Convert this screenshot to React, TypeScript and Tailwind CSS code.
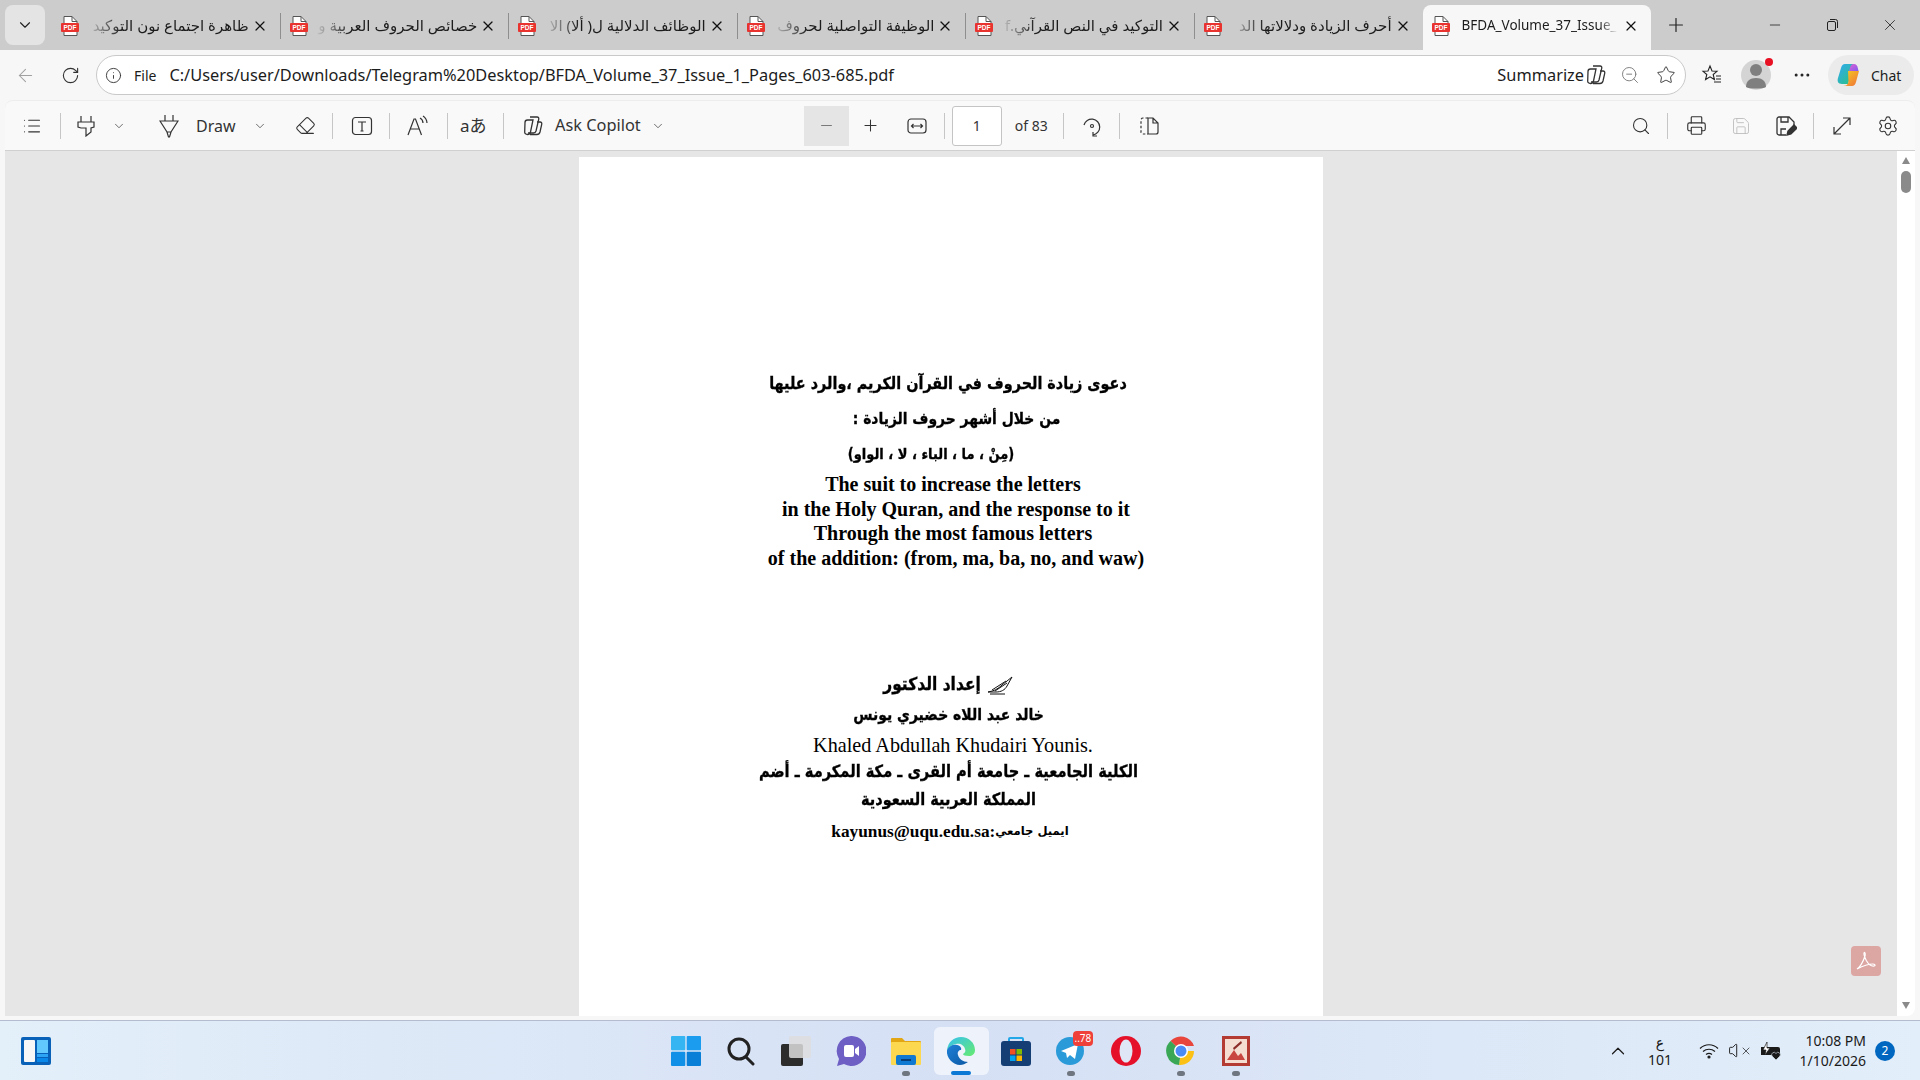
import React from 'react';
import {
  ArrowLeft,
  ChevronDown,
  ChevronUp,
  Ellipsis,
  Eraser,
  Info,
  List,
  Minus,
  Plus,
  Printer,
  RotateCw,
  Save,
  Search,
  Settings,
  Star,
  Volume,
  X,
  ZoomOut,
} from 'lucide-react';

const tabs = [
  { title: 'ظاهرة اجتماع نون التوكيد' },
  { title: 'خصائص الحروف العربية و' },
  { title: 'الوظائف الدلالية ل( ألا) الا' },
  { title: 'الوظيفة التواصلية لحروف' },
  { title: 'التوكيد في النص القرآني.f' },
  { title: 'أحرف الزيادة ودلالاتها الد' },
];

function PdfIcon() {
  return (
    <svg width="20" height="20" viewBox="0 0 20 20" className="shrink-0">
      <path d="M4 .5h8l5 5v14H4z" fill="#fff" stroke="#555" strokeWidth="1" />
      <path d="M12 .5v5h5" fill="none" stroke="#555" strokeWidth="1" />
      <rect x="1" y="7" width="18" height="9" rx="1" fill="#e8332f" />
      <text x="10" y="14" textAnchor="middle" fontSize="6.500" fontWeight="700" fill="#fff" fontFamily="Liberation Sans, sans-serif">PDF</text>
    </svg>
  );
}

function Sep() {
  return <div className="h-[26px] w-px shrink-0 bg-[#c6c6c6]" />;
}

function CopilotMono({ size = 22 }: { size?: number }) {
  return (
    <svg width={size} height={size} viewBox="0 0 24 24" fill="none" stroke="#333" strokeWidth="1.3" className="shrink-0">
      <path d="M9 3h7c1.5 0 2 1 1.7 2.3L15 17c-.4 1.5-1.2 2-2.5 2H7" />
      <path d="M4 8.5C4 7 5 6 6.5 6H12L9.5 18c-.3 1.4-1.5 2.5-3 2.5S3.500 19.500 3.700 18z" />
      <path d="M16 8h3c1.500 0 2 1 1.700 2.300L19 18c-.4 1.500-1.500 2.500-3 2.500H9" />
    </svg>
  );
}

function CopilotColor() {
  return (
    <svg width="28" height="28" viewBox="0 0 28 28" className="shrink-0">
      <defs>
        <linearGradient id="cpa" x1="0" y1="0" x2="1" y2="1">
          <stop offset="0" stopColor="#2fa8f5" />
          <stop offset="1" stopColor="#2cc47a" />
        </linearGradient>
        <linearGradient id="cpb" x1="0" y1="0" x2="1" y2="1">
          <stop offset="0" stopColor="#e85fd0" />
          <stop offset="1" stopColor="#7a5cf0" />
        </linearGradient>
        <linearGradient id="cpc" x1="0" y1="0" x2="1" y2="1">
          <stop offset="0" stopColor="#f5d020" />
          <stop offset="1" stopColor="#f0703a" />
        </linearGradient>
      </defs>
      <path d="M10 3h9l-6 20H7c-4 0-5-3-4-6l3-10c.7-2.500 2-4 4-4z" fill="url(#cpa)" />
      <path d="M13 10h11l-3 11c-.7 2.500-2 4-4 4H8c3 0 4.500-1 5.500-4z" fill="url(#cpc)" />
      <path d="M19 3c2 0 3.200 1.500 3.800 4l.7 3H14l1.500-4.500C16.200 3.800 17.500 3 19 3z" fill="url(#cpb)" />
    </svg>
  );
}

function TabStrip() {
  return (
    <div className="flex h-[50px] shrink-0 items-end bg-[#cccccc]">
      <div className="mb-[5px] ml-[5px] flex h-[40px] w-[40px] shrink-0 items-center justify-center rounded-lg bg-[#e4e4e4]">
        <ChevronDown size={18} strokeWidth={1.5} className="text-[#222]" />
      </div>
      <div className="ml-[7px] flex h-[45px]">
        {tabs.map((tab, i) => (
          <div key={i} className="flex h-full w-[228.600px] items-center pb-[4px] pl-[8px]">
            <PdfIcon />
            <div
              dir="rtl"
              className="ml-[6px] w-[163px] overflow-hidden whitespace-nowrap text-[15px] text-[#1c1c1c] [mask-image:linear-gradient(to_left,#000_78%,transparent)]"
            >
              {tab.title}
            </div>
            <X size={16} strokeWidth={1.8} className="ml-[3px] shrink-0 text-[#111]" />
            <div className="ml-[12px] h-[26px] w-px shrink-0 bg-[#8e8e8e]" />
          </div>
        ))}
      </div>
      <div className="-ml-[1px] flex h-[45px] w-[228px] items-center rounded-t-lg bg-[#f7f7f7] pb-[4px] pl-[8px]">
        <PdfIcon />
        <div className="ml-[11px] w-[156px] whitespace-nowrap text-[13.500px] text-[#1c1c1c] [mask-image:linear-gradient(to_right,#000_88%,transparent)]">
          BFDA_Volume_37_Issue_
        </div>
        <X size={16} strokeWidth={1.8} className="ml-[5px] shrink-0 text-[#111]" />
      </div>
      <div className="mb-[5px] ml-[14px] flex h-[40px] items-center">
        <Plus size={22} strokeWidth={1.3} className="text-[#222]" />
      </div>
      <div className="mb-[5px] ml-auto flex h-[40px] items-center pr-[21px] text-[#222]">
        <Minus size={16} strokeWidth={1.2} />
        <svg width="14" height="14" viewBox="0 0 14 14" fill="none" stroke="#222" className="ml-[42px]">
          <rect x="2.500" y="3.500" width="8" height="9" rx="1.500" />
          <path d="M5 1.500h5.500a2 2 0 0 1 2 2V10" />
        </svg>
        <X size={18} strokeWidth={1.1} className="ml-[42px]" />
      </div>
    </div>
  );
}

function AddressRow() {
  return (
    <div className="flex h-[50px] shrink-0 items-center bg-[#f7f7f7] text-[#1c1c1c]">
      <ArrowLeft size={21} strokeWidth={1.2} className="ml-[15px] shrink-0 text-[#a0a0a0]" />
      <RotateCw size={19} strokeWidth={1.4} className="ml-[25px] shrink-0 text-[#333]" />
      <div className="ml-[16px] flex h-[40px] w-[1590px] shrink-0 items-center rounded-full border border-[#c9c9c9] bg-white">
        <Info size={17} strokeWidth={1.3} className="ml-[8px] shrink-0 text-[#333]" />
        <span className="ml-[12px] text-[14px]">File</span>
        <span className="ml-[13px] text-[16.350px]">
          C:/Users/user/Downloads/Telegram%20Desktop/BFDA_Volume_37_Issue_1_Pages_603-685.pdf
        </span>
        <span className="ml-auto text-[16.350px]">Summarize</span>
        <CopilotMono size={24} />
        <ZoomOut size={20} strokeWidth={1.1} className="ml-[12px] shrink-0 text-[#777]" />
        <Star size={20} strokeWidth={1.2} className="ml-[16px] mr-[9px] shrink-0 text-[#444]" />
      </div>
      <svg width="22" height="22" viewBox="0 0 22 22" fill="none" stroke="#222" strokeWidth="1.1" className="ml-[15px] shrink-0">
        <path d="M9 2l2 5 5 .3-3.800 3.200 1.200 5L9 12.800 4.600 15.500l1.200-5L2 7.300 7 7z" />
        <path d="M15 12h5M15 15h5M13 18h7" />
      </svg>
      <div className="relative ml-[18px] flex h-[30px] w-[30px] shrink-0 items-center justify-center rounded-full bg-[#d4d4d4]">
        <svg width="24" height="28" viewBox="0 0 24 28" fill="#7f7f7f">
          <circle cx="12" cy="9" r="6" />
          <path d="M2 26c0-6 4-9 10-9s10 3 10 9c-3 2-17 2-20 0z" />
        </svg>
        <div className="absolute -right-[2px] -top-[2px] h-[8px] w-[8px] rounded-full bg-[#e81123]" />
      </div>
      <Ellipsis size={20} strokeWidth={1.6} className="ml-[21px] shrink-0 text-[#222]" />
      <div className="ml-[16px] flex h-[40px] w-[86px] shrink-0 items-center rounded-full bg-[#ebebeb] pl-[7px]">
        <CopilotColor />
        <span className="ml-[8px] text-[14px]">Chat</span>
      </div>
    </div>
  );
}

function PdfToolbar() {
  return (
    <div className="mx-[5px] flex h-[51px] shrink-0 items-center rounded-t-lg border-b border-[#d0d0d0] border-t border-t-[#ededed] bg-[#f9f9f9] text-[#333]">
      <List size={20} strokeWidth={1.3} className="ml-[17px] shrink-0" />
      <div className="ml-[18px]"><Sep /></div>
      <svg width="20" height="22" viewBox="0 0 20 22" fill="none" stroke="#333" strokeWidth="1.2" className="ml-[15px] shrink-0">
        <path d="M5 1v6M15 1v6M2 7h16v5l-3 1v4l-5 4v-8H5v0l-3-1z" />
      </svg>
      <ChevronDown size={14} strokeWidth={1.2} className="ml-[16px] shrink-0" />
      <svg width="20" height="24" viewBox="0 0 20 24" fill="none" stroke="#333" strokeWidth="1.2" className="ml-[33px] shrink-0">
        <path d="M6 1v6M14 1v6M1 7h18l-7 11-1.500 5h-1L8 18zM8 18h4" />
      </svg>
      <span className="ml-[17px] w-[41px] text-[16px]">Draw</span>
      <ChevronDown size={14} strokeWidth={1.2} className="ml-[16px] shrink-0" />
      <Eraser size={21} strokeWidth={1.2} className="ml-[28px] shrink-0" />
      <div className="ml-[16px]"><Sep /></div>
      <svg width="22" height="22" viewBox="0 0 22 22" fill="none" stroke="#333" strokeWidth="1.2" className="ml-[18px] shrink-0">
        <rect x="1.500" y="2.500" width="19" height="17" rx="3" />
        <path d="M7 7h8M11 7v9M9.500 16h3" />
      </svg>
      <div className="ml-[16px]"><Sep /></div>
      <svg width="24" height="22" viewBox="0 0 24 22" fill="none" stroke="#333" strokeWidth="1.2" className="ml-[16px] shrink-0">
        <path d="M2 20L8 4h1.500l6 16M4.500 14h9" />
        <path d="M14 3a6 6 0 0 1 3 5M17 1a9 9 0 0 1 4 7" />
      </svg>
      <div className="ml-[17px]"><Sep /></div>
      <span className="ml-[12px] w-[27px] whitespace-nowrap text-[17px] [font-family:'Noto_Sans','Noto_Sans_CJK_JP',sans-serif]">aあ</span>
      <div className="ml-[16px]"><Sep /></div>
      <div className="ml-[17px]"><CopilotMono size={24} /></div>
      <span className="ml-[10px] text-[16.350px]">Ask Copilot</span>
      <ChevronDown size={14} strokeWidth={1.2} className="ml-[10px] shrink-0" />
      <div className="ml-[139px] flex h-[40px] w-[45px] shrink-0 items-center justify-center bg-[#e5e5e5]">
        <Minus size={17} strokeWidth={1.4} className="text-[#777]" />
      </div>
      <Plus size={19} strokeWidth={1.3} className="ml-[12px] shrink-0" />
      <svg width="20" height="20" viewBox="0 0 20 20" fill="none" stroke="#333" strokeWidth="1.2" className="ml-[27px] shrink-0">
        <rect x="1" y="3" width="18" height="14" rx="3" />
        <path d="M4.500 10h11M6.500 8l-2 2 2 2M13.500 8l2 2-2 2" />
      </svg>
      <div className="ml-[17px]"><Sep /></div>
      <div className="ml-[7px] flex h-[40px] w-[50px] shrink-0 items-center justify-center rounded-[3px] border border-[#c4c4c4] bg-white text-[14px]">1</div>
      <span className="ml-[13px] w-[34px] whitespace-nowrap text-[14px]">of 83</span>
      <div className="ml-[14px]"><Sep /></div>
      <svg width="22" height="22" viewBox="0 0 22 22" fill="none" stroke="#333" strokeWidth="1.2" className="ml-[17px] shrink-0">
        <path d="M3 10a8 8 0 1 1 9 10M12 17v4h4" />
        <circle cx="11" cy="11" r="1.500" />
      </svg>
      <div className="ml-[16px]"><Sep /></div>
      <svg width="22" height="22" viewBox="0 0 22 22" fill="none" stroke="#333" strokeWidth="1.2" className="ml-[18px] shrink-0">
        <path d="M10 3H5a2 2 0 0 0-2 2v12a2 2 0 0 0 2 2h5" strokeDasharray="2.500 2" />
        <path d="M10 3h5l5 5v9a2 2 0 0 1-2 2h-8zM15 3v5h5" />
      </svg>

      <Search size={20} strokeWidth={1.3} className="ml-auto shrink-0" />
      <div className="ml-[16px]"><Sep /></div>
      <Printer size={21} strokeWidth={1.3} className="ml-[18px] shrink-0" />
      <Save size={20} strokeWidth={1.1} className="ml-[24px] shrink-0 text-[#bdbdbd]" />
      <svg width="22" height="22" viewBox="0 0 22 22" fill="none" stroke="#333" strokeWidth="1.3" className="ml-[24px] shrink-0">
        <path d="M11 20H4a2 2 0 0 1-2-2V4a2 2 0 0 1 2-2h10l5 5v3" />
        <path d="M6 2v5h7V2M6 20v-6h5" />
        <path d="M12 20l1-4 6-6 3 3-6 6z" fill="#333" />
      </svg>
      <div className="ml-[16px]"><Sep /></div>
      <svg width="20" height="20" viewBox="0 0 20 20" fill="none" stroke="#333" strokeWidth="1.2" className="ml-[18px] shrink-0">
        <path d="M2 18L18 2M11 2h7v7M2 11v7h7" />
      </svg>
      <Settings size={22} strokeWidth={1.2} className="ml-[25px] mr-[16px] shrink-0" />
    </div>
  );
}

function PenGlyph() {
  return (
    <svg width="28" height="20" viewBox="0 0 28 20" fill="none" stroke="#111" strokeWidth="1" className="shrink-0">
      <path d="M1 17c6-1 10-3 14-7l10-8-5 9c-2 4-6 6-11 6z" />
      <path d="M5 15l14-9M8 16l12-8M3 19h15" />
    </svg>
  );
}

const arabicBold = "font-bold text-black whitespace-nowrap scale-y-[1.15] [-webkit-text-stroke:0.3px_#000] [font-family:'DejaVu_Sans',sans-serif]";
const latinBold = "font-bold text-black whitespace-nowrap text-[20px] leading-[24.500px] [font-family:'Liberation_Serif',serif]";

function PdfPage() {
  return (
    <div className="flex w-[744px] shrink-0 flex-col items-center bg-white pt-[209px]">
      <p dir="rtl" className={`${arabicBold} -ml-[6px] text-[14.400px] leading-[35px]`}>دعوى زيادة الحروف في القرآن الكريم ،والرد عليها</p>
      <p dir="rtl" className={`${arabicBold} ml-[11px] text-[13.900px] leading-[35px]`}>من خلال أشهر حروف الزيادة :</p>
      <p dir="rtl" className={`${arabicBold} -ml-[40px] text-[13px] leading-[35px]`}>(مِنْ ، ما ، الباء ، لا ، الواو)</p>
      <p className={`${latinBold} mt-[1px] ml-[4px]`}>The suit to increase the letters</p>
      <p className={`${latinBold} ml-[10px]`}>in the Holy Quran, and the response to it</p>
      <p className={`${latinBold} ml-[4px]`}>Through the most famous letters</p>
      <p className={`${latinBold} ml-[10px]`}>of the addition: (from, ma, ba, no, and waw)</p>

      <div className="mt-[100px] -ml-[4px] flex h-[30px] items-center gap-[6px]" dir="rtl">
        <PenGlyph />
        <p className={`${arabicBold} text-[15.500px]`}>إعداد الدكتور</p>
      </div>
      <p dir="rtl" className={`${arabicBold} -ml-[5px] mt-[1px] h-[29px] text-[14px] leading-[27px]`}>خالد عبد اللاه خضيري يونس</p>
      <p className="ml-[4px] h-[27px] whitespace-nowrap text-[20.200px] leading-[30px] text-black [font-family:'Liberation_Serif',serif]">Khaled Abdullah Khudairi Younis.</p>
      <p dir="rtl" className={`${arabicBold} -ml-[5px] text-[14.650px] leading-[28px]`}>الكلية الجامعية ـ جامعة أم القرى ـ مكة المكرمة ـ أضم</p>
      <p dir="rtl" className={`${arabicBold} -ml-[5px] text-[14.500px] leading-[28px]`}>المملكة العربية السعودية</p>
      <div className="mt-[5px] -ml-[2px] flex items-center">
        <span className="text-[17.300px] font-bold leading-[28px] text-black [font-family:'Liberation_Serif',serif]">kayunus@uqu.edu.sa:</span>
        <span dir="rtl" className="text-[11.600px] font-bold text-black [font-family:'DejaVu_Sans',sans-serif]">ايميل جامعي</span>
      </div>
    </div>
  );
}

function Scrollbar() {
  return (
    <div className="flex w-[18px] shrink-0 flex-col items-center rounded-br-lg bg-white pt-[6px]">
      <div className="h-0 w-0 border-x-[4px] border-b-[7px] border-x-transparent border-b-[#8a8a8a]" />
      <div className="mt-[7px] h-[22px] w-[10px] rounded-full bg-[#8a8a8a]" />
      <div className="mt-auto mb-[7px] h-0 w-0 border-x-[4px] border-t-[7px] border-x-transparent border-t-[#8a8a8a]" />
    </div>
  );
}

function DocArea() {
  return (
    <div className="flex min-h-0 flex-1 bg-[#f7f7f7] px-[5px] pb-[4px]">
      <div className="relative flex min-w-0 flex-1 justify-center overflow-hidden bg-[#e6e6e6] pt-[6px]">
        <PdfPage />
        <div className="absolute bottom-[40px] right-[16px] flex h-[30px] w-[30px] items-center justify-center rounded bg-[#dca6a3]">
          <svg width="24" height="24" viewBox="0 0 24 24" fill="none" stroke="#fff" strokeWidth="1.2">
            <path d="M3 20c3-2 6-7 8-13 .5-2 0-4-.7-3.500-1 .7 0 4 2 8 2 3.500 5 6 8 5.500 1.500-.3.500-2-1.500-2-4 0-10 2-15.800 5z" />
          </svg>
        </div>
      </div>
      <Scrollbar />
    </div>
  );
}

function EdgeIcon() {
  return (
    <svg width="30" height="30" viewBox="0 0 30 30">
      <defs>
        <linearGradient id="eda" x1="0" y1="0" x2="1" y2="1">
          <stop offset="0" stopColor="#35c1f1" />
          <stop offset="1" stopColor="#66eb6e" />
        </linearGradient>
        <linearGradient id="edb" x1="0" y1="0" x2="1" y2="1">
          <stop offset="0" stopColor="#1f80d8" />
          <stop offset="1" stopColor="#0c59a4" />
        </linearGradient>
      </defs>
      <path d="M1 14C2 6 8 1 15 1c8 0 14 6 14 13 0 4-3 6-6 6-4 0-6-1-6-2 2-1 3-3 2-5-1-4-5-6-9-5-4 .8-7 3-9 6z" fill="url(#eda)" />
      <path d="M1 14c2-4 6-6 10-5 3 .7 5 3 4 5-2 0-4 2-3 5 1 4 5 7 10 7-3 2-5 3-8 3C7 29 0 22 1 14z" fill="url(#edb)" />
    </svg>
  );
}

function TaskApp({ children, active, dot }: { children: React.ReactNode; active?: boolean; dot?: boolean }) {
  return (
    <div className={`relative flex h-[48px] w-[55px] shrink-0 items-center justify-center rounded-md ${active ? 'bg-[#eef3fb]' : ''}`}>
      {children}
      {dot && <div className="absolute bottom-[-1px] h-[5px] w-[8px] rounded-full bg-[#6f7680]" />}
      {active && <div className="absolute bottom-[0px] h-[4px] w-[20px] rounded-full bg-[#0a78d4]" />}
    </div>
  );
}

function Taskbar() {
  return (
    <div className="relative flex h-[60px] shrink-0 items-center justify-center border-t border-[#b4bdcf] bg-gradient-to-r from-[#e3eff9] via-[#d6e0f5] to-[#e2eef9] pl-[2px]">
      {/* widgets button, far left */}
      <div className="absolute left-[21px] top-[16px]">
        <svg width="30" height="28" viewBox="0 0 30 28">
          <rect width="30" height="28" rx="2" fill="#0a62b8" />
          <rect x="3" y="3" width="11" height="22" rx="1" fill="#f7f7f7" />
          <rect x="16" y="3" width="11" height="13" fill="#62c9ff" />
          <rect x="16" y="17" width="11" height="3" fill="#2ea4f5" />
          <rect x="16" y="21" width="11" height="4" fill="#0a88ea" />
        </svg>
      </div>

      <TaskApp>
        <svg width="30" height="30" viewBox="0 0 30 30">
          <rect width="14.300" height="14.300" rx="1" fill="#36b5f3" />
          <rect x="15.700" width="14.300" height="14.300" rx="1" fill="#1b9cef" />
          <rect y="15.700" width="14.300" height="14.300" rx="1" fill="#1090e6" />
          <rect x="15.700" y="15.700" width="14.300" height="14.300" rx="1" fill="#0a7fd8" />
        </svg>
      </TaskApp>
      <TaskApp>
        <svg width="30" height="30" viewBox="0 0 30 30" fill="none" stroke="#222" strokeWidth="3">
          <circle cx="13" cy="13" r="10" />
          <path d="M20 21l7 7" strokeLinecap="round" />
        </svg>
      </TaskApp>
      <TaskApp>
        <svg width="30" height="30" viewBox="0 0 30 30">
          <rect x="0" y="8" width="22" height="22" rx="2" fill="#2c2c2c" />
          <rect x="8" y="0" width="22" height="22" rx="2" fill="#ddd" fillOpacity="0.85" />
        </svg>
      </TaskApp>
      <TaskApp>
        <svg width="30" height="30" viewBox="0 0 30 30">
          <path d="M15 0a15 15 0 1 1-7 28l-7 2 2-7A15 15 0 0 1 15 0z" fill="#6d5fc4" />
          <rect x="8" y="9" width="10" height="12" rx="2" fill="#fff" />
          <path d="M19 13l4-3v10l-4-3z" fill="#fff" />
        </svg>
      </TaskApp>
      <TaskApp dot>
        <svg width="30" height="30" viewBox="0 0 30 30">
          <path d="M0 3a1 1 0 0 1 1-1h10l3 3h15a1 1 0 0 1 1 1v4H0z" fill="#e2a514" />
          <rect y="6" width="30" height="23" rx="1" fill="#fcd750" />
          <rect x="5" y="19" width="20" height="10" rx="2" fill="#0f78d1" />
          <rect x="10" y="23" width="10" height="2" fill="#083e78" />
        </svg>
      </TaskApp>
      <TaskApp active>
        <EdgeIcon />
      </TaskApp>
      <TaskApp>
        <svg width="30" height="30" viewBox="0 0 30 30">
          <path d="M8 7V3a1 1 0 0 1 1-1h12a1 1 0 0 1 1 1v4" fill="none" stroke="#22a7e8" strokeWidth="2" />
          <rect y="5" width="30" height="25" rx="3" fill="#153e75" />
          <rect x="9" y="13" width="5.500" height="5.500" fill="#f25022" />
          <rect x="15.500" y="13" width="5.500" height="5.500" fill="#7fba00" />
          <rect x="9" y="19.500" width="5.500" height="5.500" fill="#00a4ef" />
          <rect x="15.500" y="19.500" width="5.500" height="5.500" fill="#ffb900" />
        </svg>
      </TaskApp>
      <TaskApp dot>
        <svg width="30" height="30" viewBox="0 0 30 30">
          <circle cx="14" cy="15" r="14" fill="#2a9bd8" />
          <path d="M5 15l17-7-3 15-5-4-3 3-1-5z" fill="#fff" />
        </svg>
        <div className="absolute left-[29px] top-[4px] flex h-[15px] items-center rounded-[4px] bg-[#f0403a] px-[2px] text-[10px] text-white">..78</div>
      </TaskApp>
      <TaskApp>
        <svg width="30" height="30" viewBox="0 0 30 30">
          <circle cx="15" cy="15" r="15" fill="#e5112a" />
          <ellipse cx="15" cy="15" rx="6.500" ry="11.500" fill="#dfe6f5" />
        </svg>
      </TaskApp>
      <TaskApp dot>
        <svg width="30" height="30" viewBox="0 0 30 30">
          <path d="M15 15L4.500 5A14 14 0 0 1 28 10H15z" fill="#e8453c" />
          <path d="M15 15H28A14 14 0 0 1 13 29z" fill="#fbc116" />
          <path d="M15 15L13 29A14 14 0 0 1 4.500 5z" fill="#3aa757" />
          <circle cx="15" cy="15" r="7" fill="#fff" />
          <circle cx="15" cy="15" r="5.500" fill="#4b8bf5" />
        </svg>
      </TaskApp>
      <TaskApp dot>
        <svg width="28" height="30" viewBox="0 0 28 30">
          <rect width="28" height="30" fill="#b43a34" />
          <rect x="3" y="3" width="22" height="24" fill="#f5ddd2" />
          <path d="M5 24l7-10 4 6 3-3 4 7z" fill="#c9453f" />
          <path d="M11 12l8-7 1 2-8 7z" fill="#8c2c28" />
        </svg>
      </TaskApp>

      {/* system tray */}
      <div className="absolute inset-y-0 right-[25px] flex items-center text-[#1a1a1a]">
        <ChevronUp size={22} strokeWidth={1.3} />
        <div className="ml-[19px] flex w-[24px] flex-col items-center text-[14px] leading-[17px]">
          <span>ع</span>
          <span>101</span>
        </div>
        <svg width="20" height="16" viewBox="0 0 20 16" fill="none" stroke="#1a1a1a" strokeWidth="1.200" className="ml-[27px]">
          <path d="M1 5.500c5-5 13-5 18 0M4 8.500c3.500-3 8.500-3 12 0M7 11.500c2-1.500 4-1.500 6 0" />
          <circle cx="10" cy="14" r="1" fill="#1a1a1a" />
        </svg>
        <div className="ml-[9px] flex items-center">
          <Volume size={19} strokeWidth={1.200} />
          <X size={12} strokeWidth={1.400} className="-ml-[7px]" />
        </div>
        <svg width="22" height="18" viewBox="0 0 22 18" className="ml-[8px]">
          <path d="M1 5h17a2 2 0 0 1 2 2v6H1z" fill="#1a1a1a" />
          <path d="M7 0L3 8h3l-1 5 5-7H7z" fill="#fff" stroke="#1a1a1a" strokeWidth="0.700" />
          <path d="M16 18l-4-4a2.300 2.300 0 0 1 4-2.500 2.300 2.300 0 0 1 4 2.500z" fill="#1a1a1a" stroke="#e2eef9" strokeWidth="0.600" />
        </svg>
        <div className="ml-[20px] flex w-[64px] flex-col items-end whitespace-nowrap text-[14px] leading-[20px]">
          <span>10:08 PM</span>
          <span>1/10/2026</span>
        </div>
        <div className="ml-[9px] flex h-[20px] w-[20px] items-center justify-center rounded-full bg-[#0067c0] text-[12px] text-white">2</div>
      </div>
    </div>
  );
}

export default function App() {
  return (
    <div className="flex h-[1080px] w-[1920px] flex-col overflow-hidden bg-[#f7f7f7] [font-family:'Noto_Sans','DejaVu_Sans',sans-serif]">
      <TabStrip />
      <AddressRow />
      <PdfToolbar />
      <DocArea />
      <Taskbar />
    </div>
  );
}
